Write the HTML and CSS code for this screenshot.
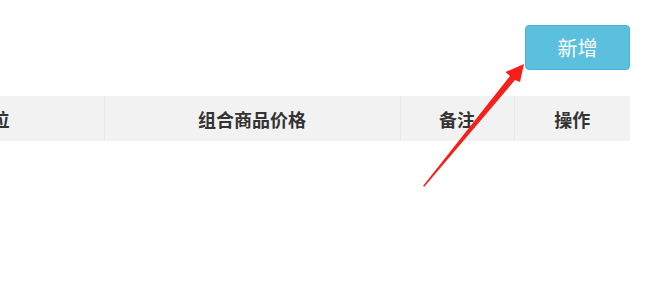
FILE: index.html
```html
<!DOCTYPE html>
<html lang="zh">

<head>
  <meta charset="UTF-8">
  <title>组合商品</title>
  <link rel="stylesheet" href="styles.css">
</head>

<body>
  <div class="page">
    <div class="toolbar">
      <button class="btn-add">新增</button>
    </div>

    <table class="grid">
      <thead>
        <tr>
          <th class="col-unit">单位</th>
          <th class="col-price">组合商品价格</th>
          <th class="col-note">备注</th>
          <th class="col-op">操作</th>
        </tr>
      </thead>
    </table>
  </div>

  <!-- annotation arrow pointing at the add button -->
  <svg class="arrow" width="650" height="305" viewBox="0 0 650 305">
    <polygon fill="#f5201a"
      points="423,186 510,76 505.5,72 524,64 520,82 515,80 424.5,186.5" />
  </svg>
</body>

</html>
```

FILE: styles.css
```css
html,
body {
  margin: 0;
  background: #fff;
  font-family: "Noto Sans CJK SC", "Noto Sans", sans-serif;
  overflow: hidden;
}

.page {
  padding: 25px 20px 0 0;
}

.toolbar {
  display: flex;
  justify-content: flex-end;
}

.btn-add {
  width: 105px;
  height: 45px;
  padding: 0;
  background: #5bc0de;
  border: 1px solid #4cb3d3;
  border-radius: 4px;
  color: #fff;
  font: normal 20px "Noto Sans CJK SC", sans-serif;
}

.grid {
  margin: 26px 0 0 -120px;
  border-collapse: collapse;
  table-layout: fixed;
  width: 750px;
}

.grid th {
  box-sizing: border-box;
  height: 45px;
  padding: 0;
  background: #f2f2f2;
  border-right: 1px solid #e9e9e9;
  color: #333;
  font-size: 18px;
  font-weight: bold;
  text-align: center;
}

.grid th:last-child {
  border-right: 0;
}

.col-unit {
  width: 224px;
}

.col-price {
  width: 296px;
}

.col-note {
  width: 114px;
}

.col-op {
  width: 116px;
}

.arrow {
  position: absolute;
  top: 0;
  left: 0;
  pointer-events: none;
}
```
